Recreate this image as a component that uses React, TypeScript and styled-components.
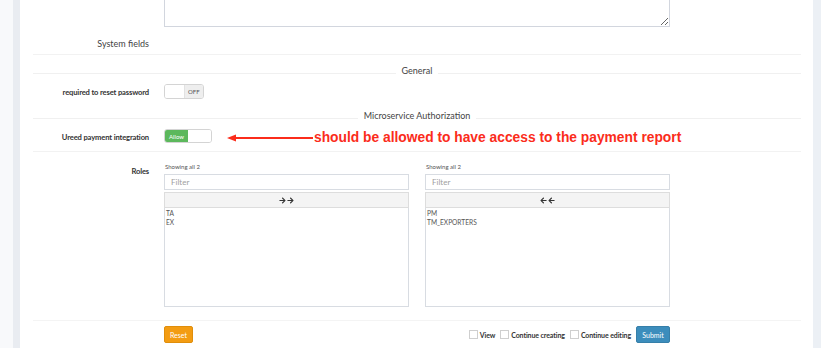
import React from "react";
import styled, { createGlobalStyle } from "styled-components";
import { FaArrowLeft, FaArrowRight } from "react-icons/fa";

const GlobalStyle = createGlobalStyle`
  html, body {
    margin: 0;
    padding: 0;
    height: 100%;
    overflow: hidden;
  }
  * {
    box-sizing: border-box;
  }
  body {
    font-family: Lato, "Liberation Sans", sans-serif;
    color: #333;
    background: #ecf0f5;
  }
`;

const Page = styled.div`
  display: flex;
  height: 348px;
`;

const LeftGutter = styled.div`
  width: 20px;
  background: #f8f9fb;
  border-right: 7px solid #e9ecf1;
`;

const RightGutter = styled.div`
  flex: 1;
  background: #ecf0f5;
`;

const Panel = styled.div`
  width: 793px;
  background: #fff;
  padding: 0 12px 0 13px;
`;

const Row = styled.div<{ $pt?: number; $pb?: number; $line?: boolean; $align?: string }>`
  display: grid;
  grid-template-columns: 116px 506px;
  column-gap: 15px;
  align-items: ${(p) => p.$align || "center"};
  padding: ${(p) => p.$pt || 0}px 0 ${(p) => p.$pb || 0}px;
  border-bottom: ${(p) => (p.$line ? "1px solid #f2f2f2" : "none")};
`;

const Label = styled.div<{ $plain?: boolean; $mt?: number }>`
  text-align: right;
  font-size: ${(p) => (p.$plain ? "9px" : "7.6px")};
  font-weight: ${(p) => (p.$plain ? 400 : 700)};
  letter-spacing: ${(p) => (p.$plain ? "0" : "-0.15px")};
  color: ${(p) => (p.$plain ? "#444" : "#333")};
  line-height: ${(p) => (p.$plain ? "14px" : "12px")};
  margin-top: ${(p) => p.$mt || 0}px;
  white-space: nowrap;
`;

const TextArea = styled.textarea`
  display: block;
  width: 506px;
  height: 27px;
  border: 1px solid #d2d6de;
  border-top: none;
  padding: 0 6px;
  font-family: inherit;
  font-size: 8px;
  color: #555;
  outline: none;
`;

const Divider = styled.div<{ $mt: number }>`
  display: flex;
  align-items: flex-start;
  margin-top: ${(p) => p.$mt}px;
  height: 14px;

  &::before,
  &::after {
    content: "";
    flex: 1;
    height: 1px;
    margin-top: 9px;
    background: #f0f0f0;
  }
`;

const DividerText = styled.span`
  padding: 0 6px;
  font-size: 9px;
  line-height: 14px;
  color: #444;
`;

const Switch = styled.div<{ $w: number; $h: number }>`
  flex-shrink: 0;
  display: flex;
  width: ${(p) => p.$w}px;
  height: ${(p) => p.$h}px;
  border: 1px solid #d4d4d4;
  border-radius: 3px;
  overflow: hidden;
  background: #fff;
`;

const SwitchPart = styled.span<{ $kind: "off" | "on" | "blank" }>`
  flex: 1;
  display: flex;
  align-items: center;
  justify-content: center;
  font-size: 6px;
  background: ${(p) => (p.$kind === "on" ? "#5cb85c" : p.$kind === "off" ? "#eeeeee" : "#fff")};
  color: ${(p) => (p.$kind === "on" ? "#fff" : "#555")};
  border-left: ${(p) => (p.$kind === "off" ? "1px solid #e2e2e2" : "none")};
`;

const FieldLine = styled.div`
  display: flex;
  align-items: center;
  height: 14px;
  white-space: nowrap;
`;

const Note = styled.span`
  flex-shrink: 0;
  margin-left: 1px;
  margin-top: 3px;
  font-family: "Liberation Sans", Arial, sans-serif;
  font-weight: 700;
  font-size: 13.8px;
  line-height: 14px;
  color: #fb2c1b;
`;

const ArrowSvg = styled.svg`
  flex-shrink: 0;
  margin-left: 15px;
  margin-top: 3px;
  display: block;
`;

const DualList = styled.div`
  display: grid;
  grid-template-columns: 245px 245px;
  column-gap: 16px;
`;

const ListCol = styled.div`
  display: flex;
  flex-direction: column;
`;

const Showing = styled.div`
  font-size: 6px;
  line-height: 10px;
  color: #555;
  padding-left: 1px;
  margin-bottom: 2px;
`;

const Filter = styled.input`
  height: 16px;
  border: 1px solid #d8dce2;
  padding: 0 6px;
  font-family: inherit;
  font-size: 8px;
  color: #555;
  outline: none;

  &::placeholder {
    color: #a0a0a0;
  }
`;

const MoveBar = styled.div`
  margin-top: 2px;
  height: 16px;
  display: flex;
  align-items: center;
  justify-content: center;
  gap: 1px;
  background: #f4f4f4;
  border: 1px solid #ddd;
  color: #333;
`;

const Options = styled.div`
  height: 99px;
  border: 1px solid #d8dce2;
  border-top: none;
  padding: 1px 1px;
  font-size: 6.6px;
  line-height: 9px;
  color: #555;
`;

const Footer = styled.div`
  display: grid;
  grid-template-columns: 116px 506px;
  column-gap: 15px;
  border-top: 1px solid #f4f4f4;
  padding-top: 5px;
  margin-top: -1px;
`;

const FooterBar = styled.div`
  display: flex;
  align-items: center;
  justify-content: space-between;
`;

const FooterRight = styled.div`
  display: flex;
  align-items: center;
  gap: 5px;
`;

const Check = styled.label`
  display: flex;
  align-items: center;
  gap: 2px;
  font-size: 7px;
  font-weight: 700;
  letter-spacing: -0.1px;
  color: #333;
`;

const CheckBox = styled.span`
  width: 9px;
  height: 9px;
  border: 1px solid #cfcfcf;
  background: #fff;
`;

const Button = styled.button<{ $tone: "warning" | "primary"; $w: number }>`
  width: ${(p) => p.$w}px;
  height: 17px;
  padding: 0;
  border-radius: 2px;
  border: 1px solid ${(p) => (p.$tone === "warning" ? "#e08e0b" : "#367fa9")};
  background: ${(p) => (p.$tone === "warning" ? "#f39c12" : "#3c8dbc")};
  color: #fff;
  font-family: inherit;
  font-size: 7px;
`;

const DualColumn: React.FC<{ dir: "right" | "left"; items: string[] }> = ({ dir, items }) => {
  const Icon = dir === "right" ? FaArrowRight : FaArrowLeft;
  return (
    <ListCol>
      <Showing>Showing all {items.length}</Showing>
      <Filter placeholder="Filter" />
      <MoveBar>
        <Icon size={7} />
        <Icon size={7} />
      </MoveBar>
      <Options>
        {items.map((it) => (
          <div key={it}>{it}</div>
        ))}
      </Options>
    </ListCol>
  );
};

const App: React.FC = () => {
  return (
    <>
      <GlobalStyle />
      <Page>
        <LeftGutter />
        <Panel>
          <Row>
            <div />
            <TextArea readOnly defaultValue="" />
          </Row>
          <Row $pt={10} $pb={3} $line>
            <Label $plain>System fields</Label>
            <div />
          </Row>
          <Divider $mt={9}>
            <DividerText>General</DividerText>
          </Divider>
          <Row $pt={6}>
            <Label $mt={1}>required to reset password</Label>
            <Switch $w={40} $h={15}>
              <SwitchPart $kind="blank" />
              <SwitchPart $kind="off">OFF</SwitchPart>
            </Switch>
          </Row>
          <Divider $mt={10}>
            <DividerText>Microservice Authorization</DividerText>
          </Divider>
          <Row $pt={6} $pb={8} $line>
            <Label $mt={2}>Ureed payment integration</Label>
            <FieldLine>
              <Switch $w={48} $h={14}>
                <SwitchPart $kind="on">Allow</SwitchPart>
                <SwitchPart $kind="blank" />
              </Switch>
              <ArrowSvg width="86" height="10" viewBox="0 0 86 10">
                <polygon points="0,5 9,1.5 9,8.5" fill="#fb2c1b" />
                <rect x="8" y="4" width="78" height="2" fill="#fb2c1b" />
              </ArrowSvg>
              <Note>should be allowed to have access to the payment report</Note>
            </FieldLine>
          </Row>
          <Row $pt={10} $pb={13} $align="start" $line>
            <Label $mt={3}>Roles</Label>
            <DualList>
              <DualColumn dir="right" items={["TA", "EX"]} />
              <DualColumn dir="left" items={["PM", "TM_EXPORTERS"]} />
            </DualList>
          </Row>
          <Footer>
            <div />
            <FooterBar>
              <Button $tone="warning" $w={29}>
                Reset
              </Button>
              <FooterRight>
                <Check>
                  <CheckBox />
                  View
                </Check>
                <Check>
                  <CheckBox />
                  Continue creating
                </Check>
                <Check>
                  <CheckBox />
                  Continue editing
                </Check>
                <Button $tone="primary" $w={34}>
                  Submit
                </Button>
              </FooterRight>
            </FooterBar>
          </Footer>
        </Panel>
        <RightGutter />
      </Page>
    </>
  );
};

export default App;
